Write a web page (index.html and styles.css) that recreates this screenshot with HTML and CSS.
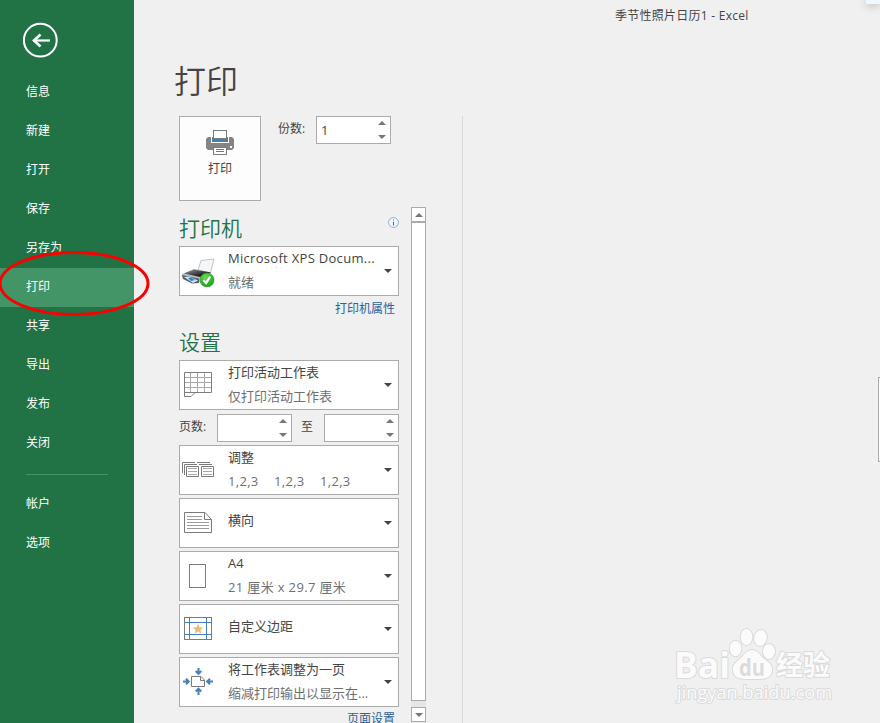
FILE: index.html
```html
<!DOCTYPE html>
<html lang="zh-CN">
<head>
    <meta charset="UTF-8">
    <meta name="viewport" content="width=device-width, initial-scale=1.0">
    <title>季节性照片日历1 - Excel</title>
    <link rel="stylesheet" href="styles.css">
</head>
<body>
    <div class="app">
        <nav class="sidebar">
            <button class="back-btn" title="返回">
                <svg width="36" height="36" viewBox="0 0 36 36" fill="none" stroke="#fff">
                    <circle cx="18.3" cy="18.2" r="16.4" stroke-width="2"/>
                    <path d="M11.5 18.5H28" stroke-width="2.2"/>
                    <path d="M18.5 12.5L12 18.5L18.5 24.5" stroke-width="2.6"/>
                </svg>
            </button>
            <ul class="menu">
                <li class="menu-item">信息</li>
                <li class="menu-item">新建</li>
                <li class="menu-item">打开</li>
                <li class="menu-item">保存</li>
                <li class="menu-item">另存为</li>
                <li class="menu-item active">打印</li>
                <li class="menu-item">共享</li>
                <li class="menu-item">导出</li>
                <li class="menu-item">发布</li>
                <li class="menu-item">关闭</li>
            </ul>
            <div class="menu-line"></div>
            <ul class="menu">
                <li class="menu-item">帐户</li>
                <li class="menu-item">选项</li>
            </ul>
        </nav>

        <main class="main">
            <div class="window-title">季节性照片日历1 - Excel</div>
            <h1 class="page-title">打印</h1>

            <div class="columns">
                <section class="print-panel">
                    <div class="print-top">
                        <button class="print-btn">
                            <svg width="28" height="26" viewBox="0 0 28 26">
                                <path d="M2 7H26L28 9V18L26 20H2L0 18V9Z" fill="#848484"/>
                                <rect x="5" y="7" width="18" height="6" fill="#fff"/>
                                <rect x="6" y="7" width="16" height="5" fill="#4580bb"/>
                                <rect x="7.5" y=".5" width="13" height="8" fill="#fff" stroke="#7b7b7b"/>
                                <rect x="7.5" y="17.5" width="13" height="7" fill="#fff" stroke="#7b7b7b"/>
                                <path d="M10 19.5H18M10 21.5H18" stroke="#4580bb"/>
                                <rect x="24" y="16" width="2" height="2" fill="#fff"/>
                            </svg>
                            <span>打印</span>
                        </button>
                        <label class="copies-label">份数:</label>
                        <div class="spinner">
                            <span class="spinner-value">1</span>
                            <span class="spinner-arrows"><i class="arrow-up"></i><i class="arrow-down"></i></span>
                        </div>
                    </div>

                    <div class="print-settings">
                        <div class="settings-list">
                            <div class="section-head">
                                <h2>打印机</h2>
                                <svg width="11" height="11" viewBox="0 0 11 11">
                                    <circle cx="5.5" cy="5.5" r="4.9" fill="#f8fbff" stroke="#86a9dc"/>
                                    <path d="M5.5 2.5V3.5M5.5 4.7V8.5" stroke="#3f69a8" stroke-width="1.1"/>
                                </svg>
                            </div>
                            <div class="dropdown">
                                <div class="dropdown-icon">
                                    <svg width="36" height="32" viewBox="0 0 36 32">
                                        <defs>
                                            <linearGradient id="lid" x1="0" y1="0" x2="1" y2="1">
                                                <stop offset="0" stop-color="#9a9c9f"/>
                                                <stop offset=".7" stop-color="#1b1d1f"/>
                                            </linearGradient>
                                            <radialGradient id="ok" cx=".4" cy=".3" r=".7">
                                                <stop offset="0" stop-color="#6ddb50"/>
                                                <stop offset="1" stop-color="#1ba120"/>
                                            </radialGradient>
                                        </defs>
                                        <path d="M18 15L21 5.5L34 4L30.5 18Z" fill="#f5f6f7" stroke="#b4b7ba" stroke-width=".8"/>
                                        <path d="M2 19L14 14L31 17.5L30 23L19 27L2 21Z" fill="#b9bec3"/>
                                        <path d="M4 18.5L14 14.5L31 17.5L20 22Z" fill="url(#lid)"/>
                                        <path d="M2 20L19 23.5V28L12 28.5L3 24Z" fill="#59616a"/>
                                        <path d="M4 22L9 21.5L18 25.5L13 28Z" fill="#cfe6f6"/>
                                        <path d="M8 23L11 22.5L15 25L11 26Z" fill="#2486d2"/>
                                        <circle cx="27" cy="25" r="7" fill="url(#ok)" stroke="#2d9f2f" stroke-width=".7"/>
                                        <path d="M23.5 25.3L26 28L30.3 21.5" fill="none" stroke="#fff" stroke-width="2.2"/>
                                    </svg>
                                </div>
                                <div class="dropdown-text">
                                    <div class="dropdown-title printer-name">Microsoft XPS Docum...</div>
                                    <div class="dropdown-desc">就绪</div>
                                </div>
                                <i class="caret"></i>
                            </div>
                            <a class="link">打印机属性</a>

                            <div class="section-head">
                                <h2>设置</h2>
                            </div>
                            <div class="dropdown">
                                <div class="dropdown-icon">
                                    <svg width="36" height="32" viewBox="0 0 36 32" fill="none">
                                        <path d="M4 8.5H31M4 13.5H31M4 18.5H31M10.5 3V23M17.5 3V23M24.5 3V23" stroke="#a8a8a8"/>
                                        <path d="M15 23.5H31.5V3.5H4.5V27.5H11L15 23.5H4.5" stroke="#7d7d7d"/>
                                    </svg>
                                </div>
                                <div class="dropdown-text">
                                    <div class="dropdown-title">打印活动工作表</div>
                                    <div class="dropdown-desc">仅打印活动工作表</div>
                                </div>
                                <i class="caret"></i>
                            </div>

                            <div class="pages-row">
                                <label class="pages-label">页数:</label>
                                <div class="spinner">
                                    <span class="spinner-value"></span>
                                    <span class="spinner-arrows"><i class="arrow-up"></i><i class="arrow-down"></i></span>
                                </div>
                                <label class="pages-to">至</label>
                                <div class="spinner">
                                    <span class="spinner-value"></span>
                                    <span class="spinner-arrows"><i class="arrow-up"></i><i class="arrow-down"></i></span>
                                </div>
                            </div>

                            <div class="dropdown">
                                <div class="dropdown-icon">
                                    <svg width="36" height="32" viewBox="0 0 36 32" fill="none" stroke="#7b7b7b">
                                        <path d="M2.5 19V8.5H15M4.5 21V10.5H17M17 8.5H30M19 10.5H32"/>
                                        <path d="M6.5 12.5H18.5V22.5H6.5ZM21.5 12.5H33.5V22.5H21.5Z"/>
                                        <path d="M8 14.5H17M8 17.5H17M8 20.5H17M23 14.5H32M23 17.5H32M23 20.5H32" stroke="#a8a8a8"/>
                                    </svg>
                                </div>
                                <div class="dropdown-text">
                                    <div class="dropdown-title">调整</div>
                                    <div class="dropdown-desc sets"><span>1,2,3</span><span>1,2,3</span><span>1,2,3</span></div>
                                </div>
                                <i class="caret"></i>
                            </div>
                            <div class="dropdown">
                                <div class="dropdown-icon">
                                    <svg width="36" height="32" viewBox="0 0 36 32" fill="none" stroke="#7b7b7b">
                                        <path d="M4.5 5.5H25L31.5 12.5V25.5H4.5ZM24.5 5.5V12.5H31.5"/>
                                        <path d="M7 9.5H22M7 12.5H22M7 15.5H29M7 18.5H29M7 21.5H29" stroke="#9c9c9c"/>
                                    </svg>
                                </div>
                                <div class="dropdown-text">
                                    <div class="dropdown-title">横向</div>
                                </div>
                                <i class="caret"></i>
                            </div>
                            <div class="dropdown">
                                <div class="dropdown-icon">
                                    <svg width="36" height="32" viewBox="0 0 36 32" fill="none" stroke="#7b7b7b">
                                        <rect x="9.5" y="4.5" width="16" height="23"/>
                                    </svg>
                                </div>
                                <div class="dropdown-text">
                                    <div class="dropdown-title">A4</div>
                                    <div class="dropdown-desc paper-size">21 厘米 x 29.7 厘米</div>
                                </div>
                                <i class="caret"></i>
                            </div>
                            <div class="dropdown">
                                <div class="dropdown-icon">
                                    <svg width="36" height="32" viewBox="0 0 36 32" fill="none">
                                        <path d="M4 9.5H32M4 21.5H32M9.5 5V27M26.5 5V27" stroke="#4580bb"/>
                                        <rect x="4.5" y="4.5" width="27" height="22" stroke="#7b7b7b"/>
                                        <path d="M18 10.6L19.5 14.2L23.200 14.5L20.400 16.900L21.300 20.600L18 18.600L14.700 20.600L15.600 16.900L12.800 14.500L16.500 14.200Z" fill="#eabb75"/>
                                    </svg>
                                </div>
                                <div class="dropdown-text">
                                    <div class="dropdown-title">自定义边距</div>
                                </div>
                                <i class="caret"></i>
                            </div>
                            <div class="dropdown">
                                <div class="dropdown-icon">
                                    <svg width="36" height="32" viewBox="0 0 36 32" fill="none">
                                        <path d="M11.5 10.5H21L24.5 14V20.5H11.5ZM20.5 10.5V14.5H24.5" stroke="#7b7b7b"/>
                                        <g stroke="#4580bb" stroke-width="2">
                                            <path d="M18.5 2V8M15.7 5L18.5 7.8L21.3 5"/>
                                            <path d="M18.5 29V23M15.7 25.5L18.5 22.7L21.3 25.5"/>
                                            <path d="M3 15.5H9M6 12.7L8.8 15.5L6 18.3"/>
                                            <path d="M33 15.5H27M30 12.7L27.2 15.5L30 18.3"/>
                                        </g>
                                    </svg>
                                </div>
                                <div class="dropdown-text">
                                    <div class="dropdown-title">将工作表调整为一页</div>
                                    <div class="dropdown-desc">缩减打印输出以显示在...</div>
                                </div>
                                <i class="caret"></i>
                            </div>
                            <a class="link page-setup">页面设置</a>
                        </div>

                        <div class="scrollbar">
                            <div class="scroll-btn"><i class="arrow-up"></i></div>
                            <div class="scroll-thumb"></div>
                            <div class="scroll-btn scroll-down"><i class="arrow-down"></i></div>
                        </div>
                    </div>
                </section>
                <section class="preview"></section>
            </div>
        </main>

        <!-- Things lying over the page -->
        <svg class="highlight" width="152" height="68" viewBox="0 0 152 68">
            <ellipse cx="74" cy="33.5" rx="74" ry="31" fill="none" stroke="#fa0000" stroke-width="3"/>
        </svg>
        <div class="corner-window"></div>
        <div class="preview-edge"></div>
        <svg class="watermark" width="170" height="84" viewBox="0 0 170 84">
            <g fill="#fbfbfb" stroke="#dadada" stroke-width="2" paint-order="stroke" stroke-linejoin="round">
                <text class="wm-logo" x="3" y="55" textLength="56" lengthAdjust="spacingAndGlyphs">Bai</text>
                <ellipse cx="64.5" cy="25.5" rx="5.8" ry="7.8"/>
                <ellipse cx="75.5" cy="14" rx="5.8" ry="8"/>
                <ellipse cx="89.5" cy="15" rx="6.2" ry="8" transform="rotate(12 89.5 15)"/>
                <ellipse cx="98" cy="28.5" rx="6" ry="7.5"/>
                <path d="M81 27C76 27 74 31 70 35C65 39 61 42 62 48C63 56 70 56 81 56C92 56 100 56 101 48C102 42 97 39 92 35C88 31 86 27 81 27Z"/>
                <text class="wm-cn" x="105" y="52" textLength="54">经验</text>
                <text class="wm-url" x="6" y="76" textLength="155" lengthAdjust="spacingAndGlyphs">jingyan.baidu.com</text>
            </g>
            <text class="wm-du" x="68" y="53" textLength="26" lengthAdjust="spacingAndGlyphs">du</text>
        </svg>
    </div>
</body>
</html>
```

FILE: styles.css
```css
/* Reset and Base Styles */
* {
    margin: 0;
    padding: 0;
    box-sizing: border-box;
}

body {
    font-family: "Open Sans", "Noto Sans CJK SC", sans-serif;
    font-size: 12px;
    background-color: #f0f0f0;
    color: #444;
    overflow: hidden;
}

button {
    font: inherit;
    color: inherit;
    border: none;
    background: none;
}

svg {
    display: block;
    flex: none;
}

.app {
    position: relative;
    display: flex;
    width: 880px;
    height: 723px;
    overflow: hidden;
}

/* Sidebar */
.sidebar {
    width: 134px;
    flex: none;
    background-color: #217346;
    color: #fff;
}

.back-btn {
    display: block;
    margin: 22px 0 15px 22px;
}

.menu {
    list-style: none;
}

.menu-item {
    height: 39px;
    line-height: 38px;
    padding-left: 26px;
}

.menu-item.active {
    background-color: #439467;
}

.menu-line {
    height: 1px;
    margin: 11px 26px 10px;
    background-color: #439467;
}

/* Main area */
.main {
    flex: 1;
    display: flex;
    flex-direction: column;
}

.window-title {
    height: 32px;
    line-height: 32px;
    padding-left: 481px;
    letter-spacing: 0.25px;
    white-space: nowrap;
}

.page-title {
    height: 84px;
    line-height: 94px;
    padding-left: 40px;
    font-family: "Noto Sans CJK SC", sans-serif;
    font-size: 32px;
    font-weight: 350;
}

.columns {
    display: flex;
    flex: 1;
    min-height: 0;
}

.print-panel {
    width: 329px;
    padding-left: 45px;
    border-right: 1px solid #dadada;
}

.preview {
    flex: 1;
}

.print-top {
    display: flex;
    align-items: flex-start;
    height: 91px;
}

.print-btn {
    display: flex;
    flex-direction: column;
    align-items: center;
    width: 82px;
    height: 85px;
    padding-top: 13px;
    line-height: 18px;
    border: 1px solid #ababab;
    background-color: #fdfdfd;
}

.print-btn span {
    margin-top: 4px;
}

.copies-label {
    width: 55px;
    padding-left: 17px;
    line-height: 26px;
}

/* Number boxes */
.spinner {
    display: flex;
    justify-content: space-between;
    width: 75px;
    height: 28px;
    padding: 0 4px;
    border: 1px solid #ababab;
    background-color: #fff;
}

.spinner-value {
    font-size: 13px;
    line-height: 27px;
}

.spinner-arrows {
    display: flex;
    flex-direction: column;
    justify-content: space-between;
    padding: 4px 0;
}

.arrow-up,
.arrow-down {
    border-left: 4px solid transparent;
    border-right: 4px solid transparent;
}

.arrow-up {
    border-bottom: 4px solid #777;
}

.arrow-down {
    border-top: 4px solid #777;
}

/* Settings */
.print-settings {
    display: flex;
    height: 516px;
}

.settings-list {
    width: 220px;
    height: 516px;
    overflow: hidden;
}

.section-head {
    display: flex;
    justify-content: space-between;
    height: 39px;
    padding-top: 10px;
}

.section-head h2 {
    font-family: "Noto Sans CJK SC", sans-serif;
    font-size: 21px;
    font-weight: 350;
    line-height: 21px;
    color: #217346;
}

.dropdown {
    display: flex;
    align-items: center;
    height: 50px;
    margin-bottom: 3px;
    padding-right: 6px;
    border: 1px solid #ababab;
    background-color: #fff;
}

.dropdown-icon {
    width: 48px;
}

.dropdown-text {
    flex: 1;
    height: 48px;
    font-size: 13px;
    white-space: nowrap;
}

.dropdown-title {
    height: 24px;
    line-height: 22px;
}

.dropdown-desc {
    line-height: 22px;
    color: #6f6f6f;
}

.dropdown-title:only-child {
    line-height: 42px;
}

.printer-name {
    letter-spacing: 0.3px;
}

.paper-size {
    letter-spacing: 0.35px;
}

.sets {
    display: flex;
    gap: 15.5px;
    letter-spacing: 0.3px;
}

.caret {
    border: 4px solid transparent;
    border-top-color: #444;
    border-bottom: none;
}

.link {
    display: block;
    height: 22px;
    padding-right: 4px;
    line-height: 19px;
    text-align: right;
    color: #2b6299;
}

.page-setup {
    height: 16px;
    line-height: 17px;
}

.pages-row {
    display: flex;
    height: 28px;
    margin: 4px 0 3px;
    line-height: 26px;
}

.pages-label {
    width: 38px;
}

.pages-to {
    width: 32px;
    padding-right: 2px;
    text-align: center;
}

/* Scrollbar */
.scrollbar {
    display: flex;
    flex-direction: column;
    width: 15px;
    margin-left: 12px;
    background-color: #e6e6e6;
}

.scroll-btn {
    display: flex;
    align-items: center;
    justify-content: center;
    height: 15px;
    border: 1px solid #ababab;
    background-color: #fff;
}

.scroll-thumb {
    height: 479px;
    border: 1px solid #ababab;
    background-color: #fff;
}

.scroll-down {
    margin-top: 6px;
}

/* Overlays */
.highlight {
    position: absolute;
    left: 0;
    top: 250px;
}

.corner-window {
    position: absolute;
    right: 0;
    top: 0;
    width: 14px;
    height: 4px;
    background-color: #f0f7fe;
    box-shadow: 0 1px 9px rgba(0, 0, 0, 0.35);
}

.preview-edge {
    position: absolute;
    right: 0;
    top: 377px;
    width: 2px;
    height: 85px;
    border: 1px solid #ababab;
    border-right: none;
    background-color: #fff;
}

.watermark {
    position: absolute;
    left: 671px;
    top: 623px;
}

.wm-logo {
    font: 700 36px "Open Sans", sans-serif;
}

.wm-cn {
    font: 700 27px "Noto Sans CJK SC", sans-serif;
}

.wm-url {
    font: 400 18px "Open Sans", sans-serif;
}

.wm-du {
    font: 700 23px "Open Sans", sans-serif;
    fill: #dcdcdc;
}
```
